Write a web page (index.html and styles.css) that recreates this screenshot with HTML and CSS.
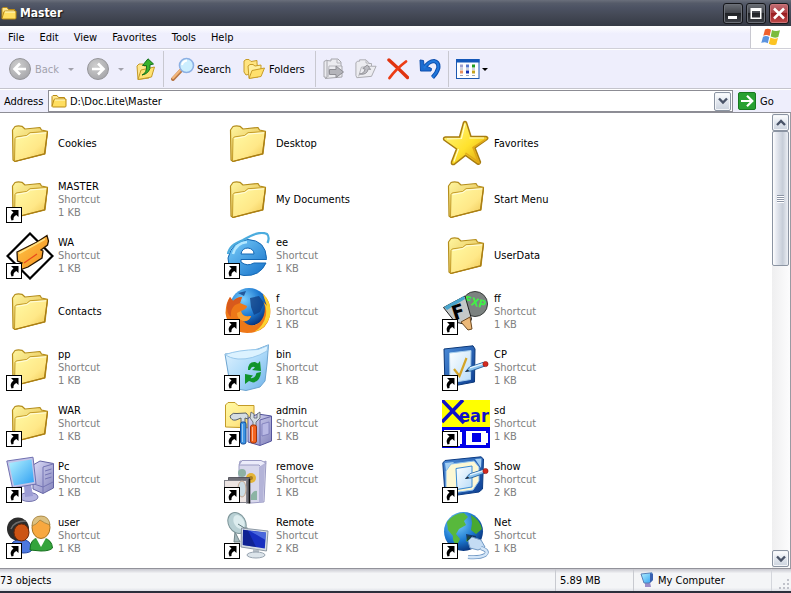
FILE: index.html
```html
<!DOCTYPE html>
<html lang="en">
<head>
    <meta charset="UTF-8">
    <meta name="viewport" content="width=device-width, initial-scale=1.0">
    <title>Master</title>
    <link rel="stylesheet" href="styles.css">
</head>
<body>
    <!-- shared shapes -->
    <svg class="defs" aria-hidden="true">
        <defs>
            <linearGradient id="gBack" x1="0" y1="0" x2="1" y2="1"><stop offset="0" stop-color="#fff6a0"/><stop offset="1" stop-color="#dcae38"/></linearGradient>
            <linearGradient id="gFront" x1="0" y1="0" x2="1" y2="1"><stop offset="0" stop-color="#fffaa4"/><stop offset=".6" stop-color="#ffe888"/><stop offset="1" stop-color="#edc24c"/></linearGradient>
            <linearGradient id="gStar" x1="0" y1="0" x2="1" y2="1"><stop offset="0" stop-color="#fff68a"/><stop offset=".55" stop-color="#ffe22e"/><stop offset="1" stop-color="#d89c0c"/></linearGradient>
            <linearGradient id="gScreen" x1="0" y1="0" x2="1" y2="1"><stop offset="0" stop-color="#b4f2ff"/><stop offset="1" stop-color="#2e9ff2"/></linearGradient>
            <linearGradient id="gCase" x1="0" y1="0" x2="1" y2="1"><stop offset="0" stop-color="#dcdcf8"/><stop offset="1" stop-color="#8484bc"/></linearGradient>
            <linearGradient id="gOrange" x1="0" y1="0" x2="1" y2="1"><stop offset="0" stop-color="#ffc94a"/><stop offset="1" stop-color="#f58c1c"/></linearGradient>
            <linearGradient id="gBlue" x1="0" y1="0" x2="1" y2="1"><stop offset="0" stop-color="#7cd0fc"/><stop offset="1" stop-color="#1470c8"/></linearGradient>
            <linearGradient id="gTablet" x1="0" y1="0" x2="1" y2="1"><stop offset="0" stop-color="#4c8cd8"/><stop offset="1" stop-color="#0a3c90"/></linearGradient>
            <linearGradient id="gPaper" x1="0" y1="0" x2="1" y2="1"><stop offset="0" stop-color="#fff"/><stop offset="1" stop-color="#b8dcf8"/></linearGradient>
            <linearGradient id="gBin" x1="0" y1="0" x2="1" y2="1"><stop offset="0" stop-color="#e4f4ff"/><stop offset=".5" stop-color="#b0dcfa"/><stop offset="1" stop-color="#6cb0e8"/></linearGradient>
            <radialGradient id="gGlobe" cx=".35" cy=".3" r=".75"><stop offset="0" stop-color="#7cd0ff"/><stop offset=".6" stop-color="#1c78d0"/><stop offset="1" stop-color="#083078"/></radialGradient>
            <radialGradient id="gRound" cx=".4" cy=".35" r=".65"><stop offset="0" stop-color="#cfcfcf"/><stop offset="1" stop-color="#a8a8ac"/></radialGradient>
        </defs>
        <symbol id="folder" viewBox="0 0 48 48">
            <path d="M6.500 10 L9 6.500 Q12 5.500 16 6.300 L19 9 L34 7.500 L35.500 10 L41.500 11.300 L39 34 L9 41.500 L7 40 Z" fill="url(#gBack)" stroke="#b48d1c" stroke-width="1.200" stroke-linejoin="round"/>
            <path d="M9 18.500 Q9.500 17 11 16.800 L20.500 15.500 L24 12.700 L41.500 11.500 L38.500 33.800 L8.500 41.500 Z" fill="url(#gFront)" stroke="#c39b28" stroke-linejoin="round"/>
            <path d="M10.500 18.500 L21 16.500 L24.500 14 L40 12.800" fill="none" stroke="#fffde0"/>
            <path d="M8.500 41.500 L38.500 33.800 L41.500 11.500" fill="none" stroke="#a87c14" stroke-width="1.200"/>
        </symbol>
        <symbol id="arrow" viewBox="0 0 16 16">
            <rect x="0.500" y="0.500" width="15" height="15" fill="#fff" stroke="#000"/>
            <path d="M5 3 H12.500 V10 L10.300 8 Q7 9.500 7.500 13 L5.500 13.500 Q3 9 7.500 5.500 Z" fill="#000"/>
        </symbol>
        <symbol id="pencil" viewBox="0 0 24 12">
            <path d="M0.500 10.500 L4.500 6 L18 1.500 L20 5 L6 10 Z" fill="#8cc4ee" stroke="#1c5a9c" stroke-width=".9"/>
            <path d="M5 6.800 L18.500 2.600" stroke="#e6f6ff" stroke-width="1.300"/>
            <path d="M0 11 L3 8.500 L4 10 Z" fill="#222"/>
            <circle cx="20.500" cy="3" r="2.600" fill="#d42a20" stroke="#8c1410" stroke-width=".6"/>
        </symbol>
        <symbol id="smallfolder" viewBox="0 0 16 16">
            <path d="M1 13 V3.500 L2 2.500 H6 L7.500 4.500 H13.500 V6" fill="#ffe68c" stroke="#b98a14"/>
            <path d="M1 13.500 L3 6.500 Q3.500 6 4.500 6 H15 V13 Q15 14 14 14 H1.500 Z" fill="#ffde60" stroke="#b98a14"/>
            <path d="M4 7 H14" stroke="#fffbd0"/>
        </symbol>
    </svg>

    <div class="window">
        <header class="titlebar">
            <svg class="icon16" aria-hidden="true"><use href="#smallfolder"/></svg>
            <h1>Master</h1>
            <div class="controls">
                <button aria-label="Minimize"><svg viewBox="0 0 18 19" width="18" height="19"><path d="M4 12 H13 V15 H4 Z" fill="#fff"/></svg></button>
                <button aria-label="Maximize"><svg viewBox="0 0 18 19" width="18" height="19"><path d="M3.500 4 H14.500 V15 H3.500 Z M5 7 V13.500 H13 V7 Z" fill="#fff" fill-rule="evenodd"/></svg></button>
                <button class="close" aria-label="Close"><svg viewBox="0 0 18 19" width="18" height="19"><path d="M4 4.500 L14 14.500 M14 4.500 L4 14.500" stroke="#fff" stroke-width="2.500"/></svg></button>
            </div>
        </header>

        <nav class="menubar">
            <button>File</button>
            <button>Edit</button>
            <button>View</button>
            <button>Favorites</button>
            <button>Tools</button>
            <button>Help</button>
            <div class="flag">
                <svg viewBox="0 0 20 18" width="20" height="18" aria-hidden="true">
                    <path d="M4 1.500 Q7 0 10 1.800 L8.600 8 Q5.500 6.300 2.300 7.800 Z" fill="#f0602c"/>
                    <path d="M11 2 Q14.500 4 19 2.300 L17.300 9 Q13.500 10.500 9.700 8.500 Z" fill="#7cbc3c"/>
                    <path d="M2 8.800 Q5.200 7.300 8.300 9 L6.800 15.200 Q3.500 13.500 0.300 15 Z" fill="#5c94e0"/>
                    <path d="M9.400 9.500 Q13 11.500 17 10 L15.300 16.500 Q11.500 18 7.800 15.800 Z" fill="#fcc424"/>
                </svg>
            </div>
        </nav>

        <div class="toolbar">
            <button class="back" disabled>
                <svg viewBox="0 0 22 22" width="22" height="22" aria-hidden="true"><circle cx="11" cy="11" r="10.500" fill="url(#gRound)" stroke="#96969a"/><path d="M17 11 H6 M11 5.500 L5.500 11 L11 16.500" fill="none" stroke="#fff" stroke-width="2.600"/></svg>
                Back
                <i class="caret"></i>
            </button>
            <button class="forward" disabled aria-label="Forward">
                <svg viewBox="0 0 22 22" width="22" height="22" aria-hidden="true"><circle cx="11" cy="11" r="10.500" fill="url(#gRound)" stroke="#96969a"/><path d="M5 11 H16 M11 5.500 L16.500 11 L11 16.500" fill="none" stroke="#fff" stroke-width="2.600"/></svg>
                <i class="caret"></i>
            </button>
            <button class="up" aria-label="Up">
                <svg viewBox="0 0 20 22" width="20" height="22" aria-hidden="true">
                    <path d="M1 8 L3 6 H7 L8 8 H13 V20 L2 21.500 Z" fill="#ffe68c" stroke="#c39a28"/>
                    <path d="M2 21.500 L5 12 L18.500 9 L15.500 19 Z" fill="#ffe272" stroke="#c39a28"/>
                    <path d="M6 17 Q11 15 10.500 7.500 H6.500 L12 0.800 L17.500 6 L14 6.800 Q15 15 6 17 Z" fill="#38b22c" stroke="#14701a"/>
                </svg>
            </button>
            <span class="sep"></span>
            <button class="search">
                <svg viewBox="0 0 24 24" width="24" height="24" aria-hidden="true">
                    <path d="M2 22 L10 13.500" stroke="#b87848" stroke-width="4" stroke-linecap="round"/>
                    <path d="M2 21 L9 13.500" stroke="#f4b87c" stroke-width="2" stroke-linecap="round"/>
                    <circle cx="15.500" cy="8.500" r="7" fill="#cceefe" stroke="#8cb0e4" stroke-width="1.600"/>
                    <path d="M11 8 Q12 4 16 3.500" fill="none" stroke="#fff" stroke-width="2"/>
                </svg>
                Search
            </button>
            <button class="folders">
                <svg viewBox="0 0 22 22" width="22" height="22" aria-hidden="true">
                    <path d="M1 14 V3 L3 1.500 H6 L8 3.500 L14 2.500 V5 L15 14 L3 17 Z" fill="#ffe480" stroke="#c79c28"/>
                    <path d="M5 8 L7 6.500 H10 L12 8 L18 7 V10 L15 19 L6 20 Z" fill="#fff0a0" stroke="#c79c28"/>
                    <path d="M6 20.500 L9 12.500 L21.500 10 L18 18.500 Z" fill="#ffe06c" stroke="#c79c28"/>
                </svg>
                Folders
            </button>
            <span class="sep"></span>
            <div class="tools">
                <button aria-label="Move to" disabled>
                    <svg viewBox="0 0 22 22" width="22" height="22" aria-hidden="true">
                        <path d="M1 19 V3.500 L4 2 V19.500 Z M4 2.500 L8 3 V1 H15 L18 4 V8 H19 V19 L2 20.500" fill="#ececf0" stroke="#a6a6ac"/>
                        <path d="M5 19 L6 8 H18 M14 1.500 V5 H18" fill="none" stroke="#b6b6bc"/>
                        <path d="M6.500 11.500 H13 V8 L20.500 14 L13 19.500 V16.500 H6.500 Z" fill="#b4b4ba" stroke="#8e8e94"/>
                    </svg>
                </button>
                <button aria-label="Copy to" disabled>
                    <svg viewBox="0 0 24 22" width="22" height="22" aria-hidden="true">
                        <path d="M1 18 V4 L3 2.500 H5 V1 H12 L15 4 V5 H18 V8 H23 L18 19 L2 20.500 Z" fill="#ececf0" stroke="#a6a6ac"/>
                        <path d="M4 19 L7 9 L18 8 M12 1.500 V4.500 H15" fill="none" stroke="#b0b0b6"/>
                        <path d="M5 16.500 Q10 16 11 11 L8.500 10.500 L13.500 6.500 L17 11.500 L14.500 11 Q13 18 5 16.500 Z" fill="#bcbcc2" stroke="#8e8e94"/>
                    </svg>
                </button>
                <button aria-label="Delete">
                    <svg viewBox="0 0 22 22" width="22" height="22" aria-hidden="true">
                        <path d="M2 2 Q11 10 20.500 19.500" fill="none" stroke="#e03410" stroke-width="3.400" stroke-linecap="round"/>
                        <path d="M19 3.500 Q9 11 2.500 20" fill="none" stroke="#ec3c14" stroke-width="2.800" stroke-linecap="round"/>
                    </svg>
                </button>
                <button aria-label="Undo">
                    <svg viewBox="0 0 22 22" width="22" height="22" aria-hidden="true">
                        <path d="M5 10 Q10 3 15 3 Q20 4 19.300 10 Q18 15 13.500 19.500" fill="none" stroke="#0e4fae" stroke-width="4.200"/>
                        <path d="M1 2 L4.500 2.500 L5 7 L12.500 10.500 L12 13 L1.500 13 Z" fill="#1c6cd0" stroke="#0e4fae"/>
                        <path d="M5 10 Q10 3 15 3 Q20 4 19.300 10 Q18 15 13.500 19.500" fill="none" stroke="#2078dc" stroke-width="2.200"/>
                    </svg>
                </button>
            </div>
            <span class="sep"></span>
            <button class="views" aria-label="Views">
                <svg viewBox="0 0 24 20" width="24" height="20" aria-hidden="true">
                    <rect x="0.500" y="0.500" width="22.500" height="19" fill="#fff" stroke="#1c58b0"/>
                    <rect width="23.500" height="3.500" fill="#1458b8"/>
                    <path d="M4 5.500 H7 V8.500 H4 Z" fill="#a0a0cc"/><path d="M10 5.500 H13 V8.500 H10 Z" fill="#5878cc"/><path d="M16 5.500 H19 V8.500 H16 Z" fill="#209c20"/>
                    <path d="M4 11.500 H7 V14.500 H4 Z" fill="#e89060"/><path d="M10 11.500 H13 V14.500 H10 Z" fill="#1430b0"/><path d="M16 11.500 H19 V14.500 H16 Z" fill="#c4a420"/>
                    <path d="M4 10 H7 M10 10 H13 M16 10 H19 M4 16.500 H7 M10 16.500 H13 M16 16.500 H19" stroke="#a0a8b8"/>
                </svg>
                <i class="caret"></i>
            </button>
        </div>

        <form class="addressbar">
            <label for="address">Address</label>
            <div class="combo">
                <svg class="icon16" aria-hidden="true"><use href="#smallfolder"/></svg>
                <input type="text" id="address" value="D:\Doc.Lite\Master">
                <button type="button" class="xpbtn" aria-label="Show addresses"><svg viewBox="0 0 10 8" width="10" height="8"><path d="M1 1.500 L5 5.500 L9 1.500" fill="none" stroke="#4a5468" stroke-width="2.400"/></svg></button>
            </div>
            <button type="button" class="go">
                <svg viewBox="0 0 18 18" width="18" height="18" aria-hidden="true"><rect x="0.500" y="0.500" width="17" height="17" rx="1.500" fill="#28a032" stroke="#187820"/><path d="M3 9 H14 M9 3.800 L14.300 9 L9 14.200" fill="none" stroke="#fff" stroke-width="2.200"/></svg>
                Go
            </button>
        </form>

        <main class="content">
            <ul class="files">
                <li>
                    <svg viewBox="0 0 48 48" aria-hidden="true"><use href="#folder"/></svg>
                    <p>Cookies</p>
                </li>
                <li>
                    <svg viewBox="0 0 48 48" aria-hidden="true"><use href="#folder"/></svg>
                    <p>Desktop</p>
                </li>
                <li>
                    <svg viewBox="0 0 48 48" aria-hidden="true">
                        <path d="M21.500 2.500 Q23 0.500 24.500 2.500 L29 16.500 L44 16.500 Q47 17.500 45 19.500 L33 28 L38.500 42 Q38 45 35.500 44 L23.500 35.500 L12 44.500 Q9 45 9.500 42 L14.500 29 L2 20 Q0.500 17.500 3.500 17 L17.500 17 Z" fill="url(#gStar)" stroke="#a87c10" stroke-width="1.500"/>
                        <path d="M23 4 L19.500 18.500 L5 18.800 M16.500 29 L12 41.500 M27.500 18 L42 18" fill="none" stroke="#fffcc8" stroke-width="1.200"/>
                        <path d="M43.500 19.500 L31 27.500 L36.500 42 L23.500 33" fill="none" stroke="#e0a818" stroke-width="1.500"/>
                    </svg>
                    <p>Favorites</p>
                </li>

                <li>
                    <svg viewBox="0 0 48 48" aria-hidden="true"><use href="#folder"/><use href="#arrow" y="31" width="16" height="16"/></svg>
                    <p>MASTER<small>Shortcut</small><small>1 KB</small></p>
                </li>
                <li>
                    <svg viewBox="0 0 48 48" aria-hidden="true"><use href="#folder"/></svg>
                    <p>My Documents</p>
                </li>
                <li>
                    <svg viewBox="0 0 48 48" aria-hidden="true"><use href="#folder"/></svg>
                    <p>Start Menu</p>
                </li>

                <li>
                    <svg viewBox="0 0 48 48" aria-hidden="true">
                        <path d="M24 1.500 L46.500 24 L24 46.500 L1.500 24 Z" fill="#fff" stroke="#000" stroke-width="2.200"/>
                        <path d="M11 20 L31 10 L41 3.500 L42.500 9 L41.500 13 L35 18 L37 19 L36 26 L22 35 L15 37.500 L13 34 L16 31 L11.500 29 Z" fill="url(#gOrange)" stroke="#2c1800" stroke-width="1.300"/>
                        <path d="M18 31 L31 22" stroke="#e8481c" stroke-width="1.200"/>
                        <path d="M13 21.500 L39 7" stroke="#ffe080" stroke-width="1.500"/>
                        <use href="#arrow" y="31" width="16" height="16"/>
                    </svg>
                    <p>WA<small>Shortcut</small><small>1 KB</small></p>
                </li>
                <li>
                    <svg viewBox="0 0 48 48" aria-hidden="true">
                        <path d="M42.500 26.500 Q42 8.500 24 7.500 Q8 9 4 26 Q4 42 20 43.500 Q36 44.500 42 31 H30 Q23 35 17 30 V27.500 H42.500 Z M17 22 Q18 16 24 16 Q30 17 30 22 Z" fill="url(#gBlue)" stroke="#1468b4" fill-rule="evenodd"/>
                        <path d="M9 22 Q12 11 23 10" fill="none" stroke="#b4e8ff" stroke-width="2.500"/>
                        <path d="M4 22 Q5 13 19 8 Q35 -2 43 2 Q46 5 43.500 11" fill="none" stroke="#4cacde" stroke-width="2.200"/>
                        <use href="#arrow" y="31" width="16" height="16"/>
                    </svg>
                    <p>ee<small>Shortcut</small><small>1 KB</small></p>
                </li>
                <li>
                    <svg viewBox="0 0 48 48" aria-hidden="true"><use href="#folder"/></svg>
                    <p>UserData</p>
                </li>

                <li>
                    <svg viewBox="0 0 48 48" aria-hidden="true"><use href="#folder"/></svg>
                    <p>Contacts</p>
                </li>
                <li>
                    <svg viewBox="0 0 48 48" aria-hidden="true">
                        <circle cx="25" cy="19" r="19" fill="url(#gGlobe)"/>
                        <path d="M26 10 L35 8 L40 15 L36 24 L30 27 L27 19 Z M14 5 L22 3 L20 8 Z" fill="#103c80" opacity=".75"/>
                        <path d="M39 6 Q48 14 46 28 Q42 45 23 45 Q4 44 1.500 25 Q2 14 6 9 L9 13 Q13 9 18 9 L16 15 L23 18 Q23 21 17 23 Q18 30 27 28 Q25 34 19 33 Q27 41 36 34 Q43 26 40 14 L43 18 Z" fill="#ee7818"/>
                        <path d="M39 6 Q48 14 46 28 Q42 41 30 44 Q40 38 42 27 Q43 18 39 14 L43 18 Z" fill="#fcd430"/>
                        <path d="M6 9 L9 13 Q13 9 18 9 L16 15 L11 17 Q6 21 7 29 Q2 25 3 16 Z" fill="#d8591c"/>
                        <path d="M17 23 Q18 30 27 28 Q25 34 19 33 Q13 31 13 25 Z" fill="#f8a030"/>
                        <use href="#arrow" y="31" width="16" height="16"/>
                    </svg>
                    <p>f<small>Shortcut</small><small>1 KB</small></p>
                </li>
                <li>
                    <svg viewBox="0 0 48 48" aria-hidden="true">
                        <circle cx="33" cy="16" r="12.500" fill="#7c8280" stroke="#383c3a"/>
                        <text class="fxp" x="22" y="18" transform="rotate(14 33 16)">FXP</text>
                        <path d="M1.500 19.500 L23 8 L29.500 31 L27 37 L22 36 L13 34 Z" fill="#c4c8c8" stroke="#222"/>
                        <path d="M2 19 L22 8 L23 11 L5 22 Z" fill="#48a4cc"/>
                        <path d="M19 34 L28 29 L30 41 L26 42 Z" fill="#ecb878" stroke="#6c4820"/>
                        <text class="ff" x="10" y="31" transform="rotate(-18 16 24)">F</text>
                        <use href="#arrow" y="31" width="16" height="16"/>
                    </svg>
                    <p>ff<small>Shortcut</small><small>1 KB</small></p>
                </li>

                <li>
                    <svg viewBox="0 0 48 48" aria-hidden="true"><use href="#folder"/><use href="#arrow" y="31" width="16" height="16"/></svg>
                    <p>pp<small>Shortcut</small><small>1 KB</small></p>
                </li>
                <li>
                    <svg viewBox="0 0 48 48" aria-hidden="true">
                        <path d="M1 10 L14 9 L34 5 L44.500 0.800 L43 20 L41 37 L36 43 L22 46.500 L8 44 L6 40 Z" fill="url(#gBin)" stroke="#6ca4d0"/>
                        <path d="M1.500 10.500 Q14 6 34 5.500 L44 1.500 L43 7 Q28 16 14 15 Q5 14 1.500 10.500 Z" fill="#dcf2ff" stroke="#98c8ec"/>
                        <path d="M24 26 Q24 17.500 31 18 L34 19.500 L36 17 L37 27 L28 26 L31 23.500 Q28 21 26 26 Z" fill="#10942c"/>
                        <path d="M37 28 Q36 38 29 38.500 L25 37 L21 40 L21 30 L29 31.500 L26.500 34 Q31 35 32.500 29 Z" fill="#10942c"/>
                        <use href="#arrow" y="31" width="16" height="16"/>
                    </svg>
                    <p>bin<small>Shortcut</small><small>1 KB</small></p>
                </li>
                <li>
                    <svg viewBox="0 0 48 48" aria-hidden="true">
                        <path d="M2 5 L31 1.800 L33 5 L32.500 38 L3 43.500 Z" fill="url(#gTablet)" stroke="#0c3878"/>
                        <path d="M7.500 9 L29 6.500 L28.500 35.500 L8 39 Z" fill="url(#gPaper)" stroke="#a4ccec"/>
                        <path d="M12 25 L17.500 32 L24.500 14" fill="none" stroke="#d4a428" stroke-width="2.200"/>
                        <use href="#pencil" x="23" y="17" width="24" height="12"/>
                        <use href="#arrow" y="31" width="16" height="16"/>
                    </svg>
                    <p>CP<small>Shortcut</small><small>1 KB</small></p>
                </li>

                <li>
                    <svg viewBox="0 0 48 48" aria-hidden="true"><use href="#folder"/><use href="#arrow" y="31" width="16" height="16"/></svg>
                    <p>WAR<small>Shortcut</small><small>1 KB</small></p>
                </li>
                <li>
                    <svg viewBox="0 0 48 48" aria-hidden="true">
                        <path d="M1.500 27 V5 L4 2.500 H11 L14 5.500 H30 V28 Z" fill="url(#gFront)" stroke="#c39b28"/>
                        <path d="M24 18 L34 14 L47.500 16 V41 L36 45.500 L24 42 Z" fill="url(#gCase)" stroke="#54549c"/>
                        <path d="M36 20 L47 16.500 M36 20 V45" stroke="#6868a8"/><path d="M38 24 L45 22 V34 L38 36 Z" fill="#b8b8e4" stroke="#7474b4" stroke-width=".7"/>
                        <path d="M6 16 Q9 12 13 13.500 L22 13 Q25 15 24 19 L21 18 V23 H17 V18 L12 20 Q7 21 6 16 Z" fill="#d4dce2" stroke="#586068"/>
                        <path d="M27 12 L26 18 L29 22 V26 H32 V22 L36 18 V12 L33 14 V18 H30 V14 Z" fill="#d4dce2" stroke="#586068" stroke-width=".8"/>
                        <rect x="16.500" y="22" width="5.500" height="22" rx="2" fill="#3c94e4" stroke="#144c98"/>
                        <rect x="26.500" y="25" width="6" height="18" rx="2" fill="#f46420" stroke="#a03408"/>
                        <path d="M18.500 24 V42 M28.500 27 V41" stroke="#fff" opacity=".5"/>
                        <use href="#arrow" y="31" width="16" height="16"/>
                    </svg>
                    <p>admin<small>Shortcut</small><small>1 KB</small></p>
                </li>
                <li>
                    <svg viewBox="0 0 48 48" aria-hidden="true">
                        <rect width="48" height="27" fill="#ff0"/>
                        <rect y="27" width="48" height="21" fill="#0000e8"/>
                        <path d="M0 0 L22 23 M21 0 L0 22" stroke="#1010c8" stroke-width="3.500"/>
                        <text class="xear" x="17" y="22">ear</text>
                        <path d="M2 30 H18 V32 H20 V44 H18 V46 H2 Z M24 31 H44 V33 H46 V43 H44 V45 H24 Z" fill="#fff"/>
                        <rect x="30" y="33" width="9" height="9" fill="#0000e8"/>
                        <use href="#arrow" y="31" width="16" height="16"/>
                    </svg>
                    <p>sd<small>Shortcut</small><small>1 KB</small></p>
                </li>

                <li>
                    <svg viewBox="0 0 48 48" aria-hidden="true">
                        <path d="M27 9 L34 5 L47.500 7.500 V32 L37 37.500 L27 33 Z" fill="url(#gCase)" stroke="#6464a4"/>
                        <path d="M37 11 L47 8 M37 11 V37 M39 15 L45.500 13 M39 19 L45.500 17 M39 23 L45.500 21 M28 28 L37 31 L47 26" fill="none" stroke="#7474b4"/>
                        <ellipse cx="23" cy="41" rx="9" ry="4.500" fill="#b4b4e0" stroke="#7474ac"/>
                        <path d="M18 30 L25 28 L27 40 L19 41 Z" fill="#9c9cd4"/>
                        <path d="M0.800 5 L27 1.200 L30 28 L6.500 32 Z" fill="#c4c4e8" stroke="#7070b0"/>
                        <path d="M3 7 L25.500 3.500 L28 26 L8 29.500 Z" fill="url(#gScreen)"/>
                        <use href="#arrow" y="31" width="16" height="16"/>
                    </svg>
                    <p>Pc<small>Shortcut</small><small>1 KB</small></p>
                </li>
                <li>
                    <svg viewBox="0 0 48 48" aria-hidden="true">
                        <path d="M15 10 L16 5 L38 7 L42 5 L40 46 L27 47 L15 44 Z" fill="#d8d8ec" stroke="#9c9cc4"/>
                        <path d="M15 9 L18 4.500 L37 4.500 L42 7 L38 12 L35 9 H18 Z" fill="#ececfa" stroke="#9c9cc4"/>
                        <path d="M35 11 L41 7 L39 46 L35 46.500 Z" fill="#b4b4d8"/>
                        <circle cx="27" cy="22" r="5" fill="#e4b438"/><circle cx="27" cy="22" r="2" fill="#a87c20"/><circle cx="18" cy="17" r="4" fill="#8cb0a4"/><path d="M27 39 Q30 34 33 35 V44 H27 Z" fill="#8cb4a4"/>
                        <path d="M4.500 21.500 H25.500 V47 H22 V24.500 H4.500 Z" fill="#707078" stroke="#44444c" stroke-width=".8"/>
                        <path d="M25.500 23 V47.500" stroke="#111" stroke-width="1.600"/>
                        <rect x="0.500" y="24.500" width="22" height="22" fill="#ece4e2" stroke="#808088"/>
                        <ellipse cx="18" cy="33" rx="4" ry="8" fill="#ccdce4" stroke="#c4a890"/>
                        <use href="#arrow" y="31" width="16" height="16"/>
                    </svg>
                    <p>remove<small>Shortcut</small><small>1 KB</small></p>
                </li>
                <li>
                    <svg viewBox="0 0 48 48" aria-hidden="true">
                        <path d="M0.800 7 L3 4.500 L39 0.800 L41.500 3 L40.500 33 L37 36 L5 40.500 L3 38 Z" fill="url(#gTablet)" stroke="#0c3c84"/>
                        <path d="M3 7 L12 6 L4 15 Z M33 3 L39.500 2.500 L39 12 Z" fill="#a4d0f4"/>
                        <path d="M9 8 L32 5 L37 11 V25 L31 34 L10 37 L4 31 V15 Z" fill="#fdf8d4" stroke="#88bcec"/>
                        <path d="M14 12.500 L30 10 V31 L15 33.500 Z" fill="url(#gPaper)" stroke="#3c8cd4"/>
                        <use href="#pencil" x="23" y="12" width="24" height="12"/>
                        <use href="#arrow" y="31" width="16" height="16"/>
                    </svg>
                    <p>Show<small>Shortcut</small><small>2 KB</small></p>
                </li>

                <li>
                    <svg viewBox="0 0 48 48" aria-hidden="true">
                        <path d="M4 38 Q5 27 14 28 Q25 26 26 38 Q24 41 17 41 Z" fill="#4c78e0" stroke="#2448a4"/>
                        <path d="M24 38 Q24 27 32 26 H38 Q46 28 46.500 36 Q44 39 35 39 Z" fill="#34a43c" stroke="#14701c"/>
                        <path d="M30 26 L35 35 L40 26 Z" fill="#fff"/>
                        <ellipse cx="12" cy="17" rx="11" ry="11.500" fill="#2c2c2c"/>
                        <ellipse cx="15.500" cy="20.500" rx="7.500" ry="8.500" fill="#cc5414" stroke="#6c2808"/>
                        <path d="M5 17 Q8 9 20 9" fill="none" stroke="#6c6c6c" stroke-width="1.500"/>
                        <ellipse cx="35" cy="15.500" rx="9" ry="11" fill="#f8a840" stroke="#a4701c"/>
                        <path d="M26 14 Q26 4 35 4 Q43 4 44 13 Q38 11 34 8 Q30 13 26 14 Z" fill="#dcc080" stroke="#a4803c" stroke-width=".8"/>
                        <use href="#arrow" y="31" width="16" height="16"/>
                    </svg>
                    <p>user<small>Shortcut</small><small>1 KB</small></p>
                </li>
                <li>
                    <svg viewBox="0 0 48 48" aria-hidden="true">
                        <path d="M11 20 L16 30 H10 Z" fill="#a4b8bc" stroke="#708488"/>
                        <ellipse cx="13" cy="11" rx="8.500" ry="11" transform="rotate(-30 13 11)" fill="#b8d0d4" stroke="#7c9498"/>
                        <ellipse cx="15" cy="10" rx="5" ry="7.500" transform="rotate(-30 15 10)" fill="#dcecee"/>
                        <path d="M14 12 L22 17" stroke="#60787c"/><circle cx="22" cy="17" r="2" fill="#889ca0"/>
                        <path d="M17.500 16 L44 19 L42.500 39 L17 35 Z" fill="#d4dce4" stroke="#8c98a4"/>
                        <path d="M19 17.800 L42 20.500 L40.800 36.500 L18.800 33 Z" fill="#1830c0"/>
                        <path d="M26 19 L42 20.500 L41.500 28 Z" fill="#6080e8" opacity=".7"/>
                        <path d="M19 17.800 L24 18.500 L32 35 L18.800 33 Z" fill="#0c1c80" opacity=".7"/>
                        <path d="M29 37 L35 38 V42 H29 Z" fill="#b4bcc4"/>
                        <ellipse cx="32" cy="43" rx="9" ry="3" fill="#dce4ea" stroke="#98a4b0"/>
                        <use href="#arrow" y="31" width="16" height="16"/>
                    </svg>
                    <p>Remote<small>Shortcut</small><small>2 KB</small></p>
                </li>
                <li>
                    <svg viewBox="0 0 48 48" aria-hidden="true">
                        <circle cx="21.500" cy="19.500" r="19.500" fill="url(#gGlobe)"/>
                        <path d="M5 10 Q12 1 22 1 L26 5 L22 9 L24 13 L17 17 L14 22 L18 27 L15 33 Q10 30 11 24 L6 18 Z" fill="#58b83c"/>
                        <path d="M29 3 Q38 8 40 17 L34 22 L29 18 L30 11 Z M26 24 L32 26 L29 31 L24 29 Z" fill="#48a830"/>
                        <path d="M24 22 L34 24 L33 28 L25 29 Z" fill="#102040" opacity=".7"/>
                        <path d="M26 29 L30 25 L39 28 L43 35 L36 38 L28 36 Z" fill="#c4dcf4" stroke="#7098c4"/>
                        <path d="M39 36 Q48 39 43 43 Q38 46 26 45" fill="none" stroke="#7098c4" stroke-width="4"/>
                        <path d="M39 36 Q48 39 43 43 Q38 46 26 45" fill="none" stroke="#d4e6f8" stroke-width="2.400"/>
                        <use href="#arrow" y="31" width="16" height="16"/>
                    </svg>
                    <p>Net<small>Shortcut</small><small>1 KB</small></p>
                </li>
            </ul>

            <div class="scrollbar">
                <button class="xpbtn" aria-label="Scroll up"><svg viewBox="0 0 10 8" width="10" height="8"><path d="M1 6 L5 2 L9 6" fill="none" stroke="#4a5468" stroke-width="2.400"/></svg></button>
                <div class="thumb"></div>
                <button class="xpbtn down" aria-label="Scroll down"><svg viewBox="0 0 10 8" width="10" height="8"><path d="M1 1.500 L5 5.500 L9 1.500" fill="none" stroke="#4a5468" stroke-width="2.400"/></svg></button>
            </div>
        </main>

        <footer class="statusbar">
            <span class="count">73 objects</span>
            <span class="size">5.89 MB</span>
            <span class="zone">
                <svg viewBox="0 0 14 16" width="14" height="16" aria-hidden="true"><path d="M5 10 H10 L11 15 H5 Z" fill="#9c8cc8"/><path d="M1 2 L12 0.800 L12.500 8 L9 11 H4 Z" fill="url(#gScreen)" stroke="#5880b8"/><path d="M10 1 L13 2 V8 L10 11 Z" fill="#3860b0"/></svg>
                My Computer
            </span>
            <span class="grip">
                <svg viewBox="0 0 12 12" width="12" height="12" aria-hidden="true"><path d="M8 0 h2 v2 h-2 Z M4 4 h2 v2 h-2 Z M8 4 h2 v2 h-2 Z M0 8 h2 v2 h-2 Z M4 8 h2 v2 h-2 Z M8 8 h2 v2 h-2 Z" fill="#c0c2ca"/></svg>
            </span>
        </footer>
    </div>
</body>
</html>
```
FILE: styles.css
```css
* {
    box-sizing: border-box;
}
body {
    margin: 0;
    background: #fff;
    color: #000;
    font-family: "DejaVu Sans Condensed", "DejaVu Sans", Tahoma, sans-serif;
    font-stretch: condensed;
    font-size: 11px;
    line-height: 13px;
}
button, input {
    font: inherit;
    color: inherit;
    margin: 0;
    padding: 0;
    border: 0;
    background: none;
}
button {
    display: flex;
    align-items: center;
    white-space: nowrap;
}
svg {
    display: block;
    flex: none;
}
.defs {
    position: absolute;
    width: 0;
    height: 0;
}
.icon16 {
    width: 16px;
    height: 16px;
}
.window {
    display: flex;
    flex-direction: column;
    min-height: 100vh;
    border-bottom: 2px solid #2c2f3c;
}

/* title bar */
.titlebar {
    display: flex;
    align-items: center;
    gap: 3px;
    height: 26px;
    padding: 0 2px 0 1px;
    background: linear-gradient(#6a6f7b 0, #555b69 12%, #4c5263 30%, #454a57 55%, #363a45 100%);
}
.titlebar h1 {
    flex: 1;
    margin: 0;
    color: #fff;
    font-size: 12px;
    font-weight: bold;
    text-shadow: 1px 1px 1px #111;
}
.controls {
    display: flex;
    gap: 3px;
}
.controls button {
    justify-content: center;
    width: 20px;
    height: 21px;
    border: 1px solid #15161a;
    border-radius: 3px;
    background: linear-gradient(#6b6f76, #44474e 45%, #202226 50%, #3e4148);
    box-shadow: inset 0 0 0 1px #6c7078;
}
.controls .close {
    background: linear-gradient(#c07078, #b04044 45%, #9a1c20 50%, #c04c4c);
    box-shadow: inset 0 0 0 1px #cc7478;
}

/* menu */
.menubar {
    display: flex;
    gap: 15px;
    height: 23px;
    padding-left: 8px;
    background: linear-gradient(#fff, #efeffd 35%);
    border-bottom: 1px solid #d0d0d8;
}
.flag {
    display: flex;
    align-items: center;
    justify-content: center;
    width: 41px;
    margin-left: auto;
    background: #fff;
    border-left: 1px solid #c8c8d0;
}

/* toolbar */
.toolbar {
    display: flex;
    align-items: center;
    height: 40px;
    padding-left: 9px;
    background: #eeeefc;
    border-top: 1px solid #fff;
    border-bottom: 1px solid #c4c4cc;
}
.toolbar button {
    gap: 4px;
}
.toolbar button:disabled {
    color: #a2a2ac;
}
.sep {
    align-self: stretch;
    width: 1px;
    margin: 1px 7px;
    background: #c8c8d0;
}
.caret {
    border: 3px solid transparent;
    border-top-color: currentColor;
    border-bottom: 0;
}
.back .caret, .forward .caret {
    margin-left: 5px;
}
.toolbar .forward {
    margin-left: 13px;
}
.toolbar .up {
    margin-left: 12px;
}
.toolbar .search {
    gap: 2px;
}
.toolbar .folders {
    margin-left: 12px;
    margin-right: 3px;
}
.tools {
    display: flex;
    gap: 10px;
}
.toolbar .views {
    gap: 2px;
}

/* address */
.addressbar {
    display: flex;
    align-items: center;
    height: 23px;
    padding-left: 4px;
    background: #eeeefc;
    border-top: 1px solid #fff;
}
.addressbar label {
    width: 44px;
}
.combo {
    display: flex;
    flex: 1;
    align-items: center;
    height: 22px;
    padding: 1px 1px 1px 2px;
    background: #fff;
    border: 1px solid #8c8c94;
}
.combo input {
    flex: 1;
    min-width: 0;
    padding-left: 3px;
    outline: none;
}
.xpbtn {
    justify-content: center;
    width: 17px;
    height: 19px;
    border: 1px solid #8b94a2;
    border-radius: 2px;
    background: linear-gradient(#fff, #e4e9f0 45%, #ccd3de);
    box-shadow: inset 0 0 0 1px #f4f6f9;
}
.go {
    gap: 4px;
    width: 58px;
    padding-left: 5px;
}

/* files */
.content {
    display: flex;
    flex: 1;
    background: #fff;
    border-top: 1px solid #8e8e96;
    border-right: 1px solid #9a9aa2;
}
.files {
    display: grid;
    flex: 1;
    grid-template-columns: repeat(auto-fill, 218px);
    grid-auto-rows: 56px;
    align-content: start;
    margin: 0;
    padding: 7px 0 0 6px;
    list-style: none;
}
.files li {
    display: flex;
    gap: 4px;
}
.files li svg {
    width: 48px;
    height: 48px;
}
.files p {
    align-self: center;
    margin: 0 0 10px;
}
.files small {
    display: block;
    color: #808080;
    font-size: 11px;
}
.fxp {
    font-size: 11px;
    font-weight: bold;
    fill: #40f044;
}
.ff {
    font-size: 20px;
    font-weight: bold;
    fill: #000;
}
.xear {
    font-size: 18px;
    font-weight: bold;
    fill: #1010c8;
}

/* scroll bar */
.scrollbar {
    display: flex;
    flex-direction: column;
    width: 18px;
    padding: 1px 1px 1px 0;
    background: linear-gradient(90deg, #efeff0, #fcfcfd);
}
.scrollbar .xpbtn {
    height: 17px;
}
.scrollbar .down {
    margin-top: auto;
}
.thumb {
    display: flex;
    width: 17px;
    height: 135px;
    border: 1px solid #8b94a2;
    border-radius: 2px;
    background: linear-gradient(90deg, #fff, #e8ebf2 20%, #c6cdd8 65%, #eceff4);
}
.thumb::after {
    content: "";
    width: 7px;
    height: 8px;
    margin: auto;
    background: repeating-linear-gradient(#8c95a6 0 1px, #fff 1px 2px);
}

/* status */
.statusbar {
    display: flex;
    align-items: stretch;
    height: 23px;
    background: linear-gradient(#c8c8d0, #f4f5f7 20%, #f4f5f7 85%, #e0e2e8);
    border-top: 1px solid #92929a;
}
.statusbar span {
    display: flex;
    align-items: center;
}
.statusbar .count {
    flex: 1;
}
.statusbar .size {
    width: 78px;
    padding-left: 4px;
    border-left: 1px solid #c8cad0;
}
.statusbar .zone {
    gap: 4px;
    width: 138px;
    padding-left: 6px;
    border-left: 1px solid #c8cad0;
}
.statusbar .grip {
    align-items: flex-end;
    justify-content: flex-end;
    width: 20px;
    border-left: 1px solid #d4d6dc;
}
```
